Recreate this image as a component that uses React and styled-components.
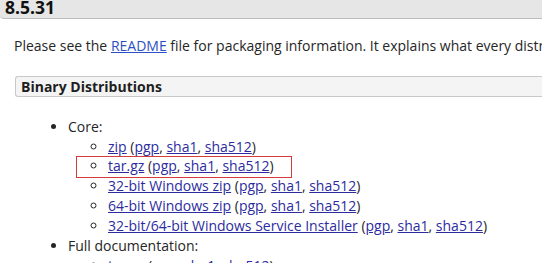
import React from "react";
import styled, { createGlobalStyle } from "styled-components";

const GlobalStyle = createGlobalStyle`
  html, body {
    margin: 0;
    padding: 0;
    overflow: hidden;
    background: #fff;
  }
  body {
    font-family: "Open Sans", "DejaVu Sans", sans-serif;
    font-size: 14px;
    color: #262626;
  }
`;

const Page = styled.div`
  width: 720px;
`;

const VersionBar = styled.h3`
  margin: 0;
  padding: 0 0 3px 5px;
  font-size: 17.5px;
  line-height: 15px;
  font-weight: 700;
  color: #111;
  background: #e6e6e6;
  border-bottom: 1px solid #bdbdbd;
  border-bottom-left-radius: 4px;
`;

const Section = styled.div`
  padding: 0 0 0 14px;
`;

const Text = styled.p`
  margin: 17px 0 0;
  line-height: 19.6px;
`;

const Link = styled.a`
  color: ${(p) => (p.$fresh ? "#2b4fc6" : "#2c2ca0")};
  text-decoration: underline;
`;

const SubHeading = styled.h4`
  margin: 20px 0 0 1px;
  padding: 0 0 0 5px;
  font-size: 14px;
  font-weight: 700;
  line-height: 19px;
  color: #1e1e1e;
  background: #f4f4f4;
  border: 1px solid #c9c9c9;
  border-right: none;
  border-radius: 3px 0 0 3px;
`;

const List = styled.ul`
  margin: 20px 0 0 14px;
  padding-left: 40px;
  line-height: 19.9px;
  list-style: disc;
`;

const SubList = styled.ul`
  margin: 0;
  padding-left: 40px;
  list-style: circle;
`;

const Item = styled.li`
  position: relative;
`;

const Highlight = styled.span`
  position: absolute;
  top: 0;
  left: -32px;
  width: 214px;
  height: 20px;
  border: 1px solid #d43c3c;
  pointer-events: none;
`;

const Sums = () => (
  <>
    {" ("}
    <Link href="#">pgp</Link>, <Link href="#">sha1</Link>,{" "}
    <Link href="#">sha512</Link>)
  </>
);

const files = [
  { name: "zip" },
  { name: "tar.gz", marked: true },
  { name: "32-bit Windows zip" },
  { name: "64-bit Windows zip" },
  { name: "32-bit/64-bit Windows Service Installer" },
];

export default function App() {
  return (
    <Page>
      <GlobalStyle />
      <VersionBar>8.5.31</VersionBar>
      <Section>
        <Text>
          Please see the <Link href="#" $fresh>README</Link> file for packaging
          information. It explains what every distribution contains.
        </Text>
        <SubHeading>Binary Distributions</SubHeading>
        <List>
          <li>
            Core:
            <SubList>
              {files.map((f) => (
                <Item key={f.name}>
                  {f.marked && <Highlight />}
                  <Link href="#">{f.name}</Link>
                  <Sums />
                </Item>
              ))}
            </SubList>
          </li>
          <li>
            Full documentation:
            <SubList>
              <Item>
                <Link href="#">tar.gz</Link>
                <Sums />
              </Item>
            </SubList>
          </li>
        </List>
      </Section>
    </Page>
  );
}
